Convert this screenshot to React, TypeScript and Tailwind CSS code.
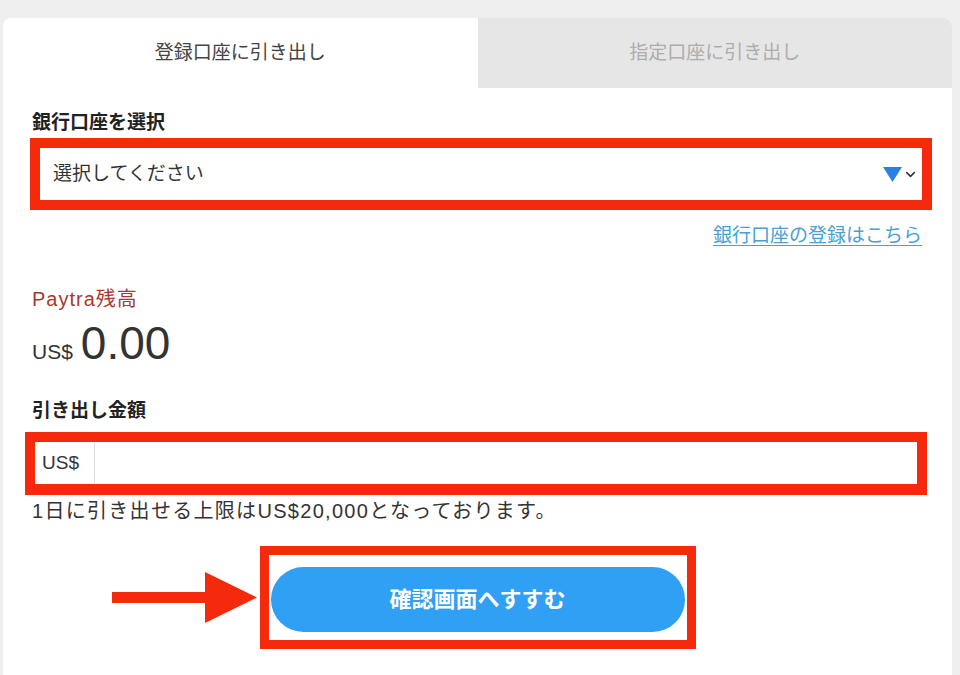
import { ChevronDown } from "lucide-react";

const FONT = {
  fontFamily: '"Liberation Sans", "Noto Sans CJK JP", sans-serif',
};

export default function App() {
  return (
    <div
      className="min-h-screen bg-[#efefef] pt-[18px] pl-[3px] pr-[8px] text-[#333]"
      style={FONT}
    >
      <div className="h-[657px] overflow-hidden rounded-t-[8px] bg-white">
        {/* tabs */}
        <div className="flex h-[70px]">
          <div className="flex flex-1 items-center justify-center text-[19px] text-[#444]">
            登録口座に引き出し
          </div>
          <div className="flex flex-1 items-center justify-center rounded-tr-[8px] bg-[#e6e6e6] text-[19px] text-[#adadad]">
            指定口座に引き出し
          </div>
        </div>

        {/* bank select */}
        <p className="ml-[29px] mt-[24px] text-[19px] font-bold leading-[22px] text-[#222]">
          銀行口座を選択
        </p>
        <div className="ml-[27px] mr-[20px] mt-[4px] border-[10px] border-[#f52a0c]">
          <div className="flex h-[52px] items-center justify-between pl-[13px] pr-[4px]">
            <span className="text-[19px] text-[#333]">選択してください</span>
            <div className="flex items-center gap-[1px]">
              <svg width="19" height="15" viewBox="0 0 19 15">
                <polygon points="0,0 19,0 9.5,15" fill="#2d7fe6" />
              </svg>
              <ChevronDown className="h-[15px] w-[15px] text-[#333]" strokeWidth={2.5} />
            </div>
          </div>
        </div>
        <div className="mr-[30px] mt-[15px] flex justify-end">
          <a className="text-[19px] leading-[22px] text-[#4aa0d2] underline underline-offset-[3px]">
            銀行口座の登録はこちら
          </a>
        </div>

        {/* balance */}
        <p className="ml-[29px] mt-[40px] text-[20px] leading-[24px] tracking-[1px] text-[#a8392c]">
          Paytra残高
        </p>
        <div className="ml-[29px] mt-[9px] flex items-baseline gap-[8px] leading-none text-[#333]">
          <span className="text-[21px]">US$</span>
          <span className="text-[46px] font-light">0.00</span>
        </div>

        {/* amount */}
        <p className="ml-[29px] mt-[34px] text-[19px] font-bold leading-[22px] text-[#222]">
          引き出し金額
        </p>
        <div className="ml-[22px] mr-[25px] mt-[10px] border-[10px] border-b-[11px] border-[#f52a0c]">
          <div className="flex h-[42px] items-stretch">
            <div className="flex w-[60px] items-center border-r border-[#dcdcdc] pl-[7px] text-[19px] text-[#333]">
              US$
            </div>
            <input className="flex-1 px-2 outline-none" />
          </div>
        </div>
        <p className="ml-[29px] mt-[3px] text-[20px] leading-[26px] tracking-[1.3px] text-[#333]">
          1日に引き出せる上限はUS$20,000となっております。
        </p>

        {/* submit */}
        <div className="relative mx-auto mt-[22px] w-[436px] border-[9px] border-[#f52a0c] px-[2px] pb-[8px] pt-[12px]">
          <svg
            className="absolute right-full top-[17px] mr-[12px]"
            width="145"
            height="51"
            viewBox="0 0 145 51"
          >
            <rect x="0" y="20" width="96" height="11" fill="#f52a0c" />
            <polygon points="93,0 145,25.5 93,51" fill="#f52a0c" />
          </svg>
          <button
            type="button"
            className="flex h-[65px] w-full items-center justify-center rounded-full bg-[#30a0f5] text-[22px] font-bold text-white"
          >
            確認画面へすすむ
          </button>
        </div>
      </div>
    </div>
  );
}
